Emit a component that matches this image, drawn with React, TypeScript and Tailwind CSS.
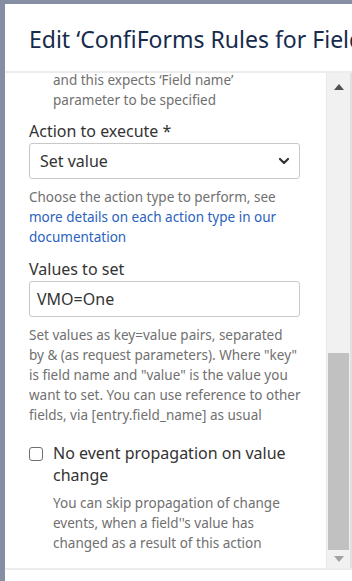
const font = "font-['Segoe_UI','Noto_Sans','Open_Sans',sans-serif]";

const Help = ({ children }: { children: React.ReactNode }) => (
  <p className="text-[13.5px] leading-[20px] text-[#707070] -mr-[6px]">{children}</p>
);

const App = () => {
  return (
    <div className={`w-[352px] h-[581px] overflow-hidden bg-[#858ea3] pl-[5px] pt-[4px] flex ${font}`}>
      <div className="flex-1 bg-white flex flex-col min-w-0">
        {/* Header */}
        <header className="h-[69px] shrink-0 flex items-center pl-[24px] border-b-2 border-[#ececec] overflow-hidden">
          <h2 className="text-[23px] text-[#172b4d] whitespace-nowrap leading-none pt-[4px]">
            Edit ‘ConfiForms Rules for Field name’
          </h2>
        </header>

        {/* Body */}
        <div className="flex-1 flex min-h-0">
          <div className="flex-1 overflow-hidden pl-[24px] pr-[26px]">
            <div className="-mt-[3px] pl-[24px]">
              <Help>and this expects ‘Field name’</Help>
              <Help>parameter to be specified</Help>
            </div>

            <label className="block mt-[10px] text-[16px] leading-[23px] text-[#333]">
              Action to execute *
            </label>
            <div className="h-[36px] border border-[#c8c8c8] rounded-[3px] flex items-center justify-between pl-[10px] pr-[8px]">
              <span className="text-[16px] text-[#333]">Set value</span>
              <svg width="14" height="14" viewBox="0 0 14 14" fill="none">
                <path d="M3 5l4 4 4-4" stroke="#333" strokeWidth="2.2" strokeLinecap="round" strokeLinejoin="round" />
              </svg>
            </div>
            <div className="mt-[8px]">
              <Help>
                Choose the action type to perform, see{" "}
                <span className="text-[#2a62c0]">more details on each action type in our documentation</span>
              </Help>
            </div>

            <label className="block mt-[11px] text-[16px] leading-[23px] text-[#333]">
              Values to set
            </label>
            <div className="h-[36px] border border-[#c8c8c8] rounded-[3px] flex items-center pl-[7px]">
              <span className="text-[16px] text-[#333]">VMO=One</span>
            </div>
            <div className="mt-[8px] whitespace-nowrap">
              <Help>
                Set values as key=value pairs, separated
                <br />
                by &amp; (as request parameters). Where "key"
                <br />
                is field name and "value" is the value you
                <br />
                want to set. You can use reference to other
                <br />
                fields, via [entry.field_name] as usual
              </Help>
            </div>

            <div className="mt-[17px] flex">
              <div className="w-[24px] shrink-0 pt-[5px]">
                <div className="w-[14px] h-[14px] border border-[#6f6f6f] rounded-[3px]" />
              </div>
              <div>
                <div className="text-[16px] leading-[22px] text-[#333]">No event propagation on value change</div>
                <div className="mt-[7px]">
                  <Help>
                    You can skip propagation of change events, when a field''s value has changed as a result of
                    this action
                  </Help>
                </div>
              </div>
            </div>
          </div>

          {/* Scrollbar */}
          <div className="w-[24px] shrink-0 bg-[#f1f1f1] flex flex-col items-center border-l border-[#e8e8e8]">
            <div className="h-[28px] w-full flex items-center justify-center">
              <svg width="10" height="6" viewBox="0 0 10 6">
                <path d="M0 6L5 0l5 6z" fill="#505050" />
              </svg>
            </div>
            <div className="flex-1 w-full flex flex-col">
              <div className="flex-1" />
              <div className="h-[197px] mx-[1px] bg-[#c1c1c1]" />
            </div>
            <div className="h-[18px] w-full flex items-center justify-center">
              <svg width="10" height="6" viewBox="0 0 10 6">
                <path d="M0 0l5 6 5-6z" fill="#a3a3a3" />
              </svg>
            </div>
          </div>
          <div className="w-[2px] shrink-0 bg-[#e0e0e0]" />
        </div>

        {/* Footer */}
        <div className="h-[13px] shrink-0 border-t-2 border-[#ececec] bg-white" />
      </div>
    </div>
  );
};

export default App;
